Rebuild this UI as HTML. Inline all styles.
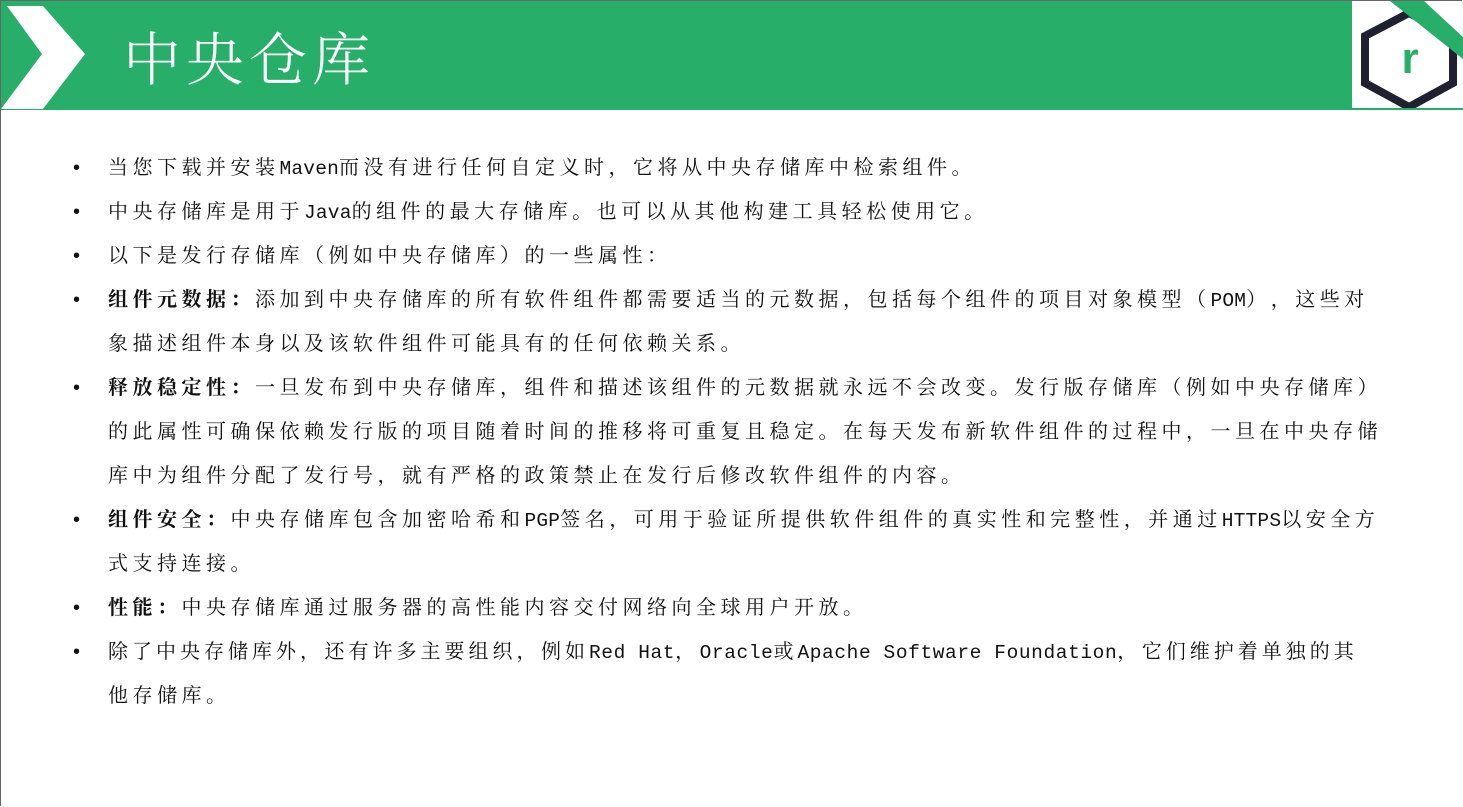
<!DOCTYPE html>
<html><head><meta charset="utf-8"><style>
body{margin:0;width:1463px;height:807px;overflow:hidden;background:#fff;position:relative;font-family:"Noto Serif CJK SC","Noto Sans CJK SC",serif}
.frame{position:absolute;left:0;top:0;width:1462px;height:806px;border-left:1px solid #666;border-top:1px solid #666;box-sizing:border-box}
.hdr{position:absolute;left:1px;top:1px;width:1351px;height:109px;background:#27ae68}
.title{position:absolute;left:122px;top:14px;color:#fff;font-family:"Noto Serif CJK SC",serif;font-size:58px;font-weight:300;letter-spacing:5px;line-height:80px}
.logo{position:absolute;left:1352px;top:1px;width:111px;height:109px;background:#fff;border-bottom:2px solid #27ae68;box-sizing:border-box;overflow:hidden}
.body{position:absolute;left:0;top:144px;font-size:20px;line-height:44px;color:#111;letter-spacing:4.5px}
.l{position:absolute;left:108px;white-space:nowrap}
.b{position:absolute;left:73px;top:2px;font-size:20px;font-family:"Liberation Sans",sans-serif}
.m{font-family:"Liberation Mono",monospace;letter-spacing:0.2px;font-size:19.5px}
.p{display:inline-block;width:24.5px;letter-spacing:0}
strong{font-weight:bold}
</style></head><body>
<div class="frame"></div>
<div class="hdr">
<svg width="90" height="109" style="position:absolute;left:0;top:0"><polygon points="6,5 42,5 84,53 42,108 0,108 41,53 6,5" fill="#fff"/></svg>
<div class="title">中央仓库</div>
</div>
<div class="logo">
<svg width="111" height="109">
<polygon points="57,12 101,35 101,82 57,106 13,82 13,35" fill="none" stroke="#1f2130" stroke-width="8" stroke-linejoin="miter"/>
<polygon points="38,0 72,0 111,36 111,58" fill="#27ae68"/>
<text x="58" y="72" text-anchor="middle" font-family="Liberation Sans,sans-serif" font-weight="bold" font-size="44" fill="#27ae68">r</text>
</svg>
</div>
<div class="body">
<div class="b" style="top:2px">•</div><div class="l" style="top:0">当您下载并安装<span class="m">Maven</span>而没有进行任何自定义时<span class="p">，</span>它将从中央存储库中检索组件。</div>
<div class="b" style="top:46px">•</div><div class="l" style="top:44px">中央存储库是用于<span class="m">Java</span>的组件的最大存储库。也可以从其他构建工具轻松使用它。</div>
<div class="b" style="top:90px">•</div><div class="l" style="top:88px">以下是发行存储库（例如中央存储库）的一些属性<span class="p">：</span></div>
<div class="b" style="top:134px">•</div><div class="l" style="top:132px"><strong>组件元数据<span class="p">：</span></strong>添加到中央存储库的所有软件组件都需要适当的元数据<span class="p">，</span>包括每个组件的项目对象模型（<span class="m">POM</span>）<span class="p">，</span>这些对</div>
<div class="l" style="top:176px">象描述组件本身以及该软件组件可能具有的任何依赖关系。</div>
<div class="b" style="top:222px">•</div><div class="l" style="top:220px"><strong>释放稳定性<span class="p">：</span></strong>一旦发布到中央存储库<span class="p">，</span>组件和描述该组件的元数据就永远不会改变。发行版存储库（例如中央存储库）</div>
<div class="l" style="top:264px">的此属性可确保依赖发行版的项目随着时间的推移将可重复且稳定。在每天发布新软件组件的过程中<span class="p">，</span>一旦在中央存储</div>
<div class="l" style="top:308px">库中为组件分配了发行号<span class="p">，</span>就有严格的政策禁止在发行后修改软件组件的内容。</div>
<div class="b" style="top:354px">•</div><div class="l" style="top:352px"><strong>组件安全<span class="p">：</span></strong>中央存储库包含加密哈希和<span class="m">PGP</span>签名<span class="p">，</span>可用于验证所提供软件组件的真实性和完整性<span class="p">，</span>并通过<span class="m">HTTPS</span>以安全方</div>
<div class="l" style="top:396px">式支持连接。</div>
<div class="b" style="top:442px">•</div><div class="l" style="top:440px"><strong>性能<span class="p">：</span></strong>中央存储库通过服务器的高性能内容交付网络向全球用户开放。</div>
<div class="b" style="top:486px">•</div><div class="l" style="top:484px;letter-spacing:4px">除了中央存储库外<span class="p">，</span>还有许多主要组织<span class="p">，</span>例如<span class="m" style="letter-spacing:0.6px">Red Hat</span><span class="p">，</span><span class="m" style="letter-spacing:0.6px">Oracle</span>或<span class="m" style="letter-spacing:0.6px">Apache Software Foundation</span><span class="p">，</span>它们维护着单独的其</div>
<div class="l" style="top:528px">他存储库。</div>
</div>
</body></html>
